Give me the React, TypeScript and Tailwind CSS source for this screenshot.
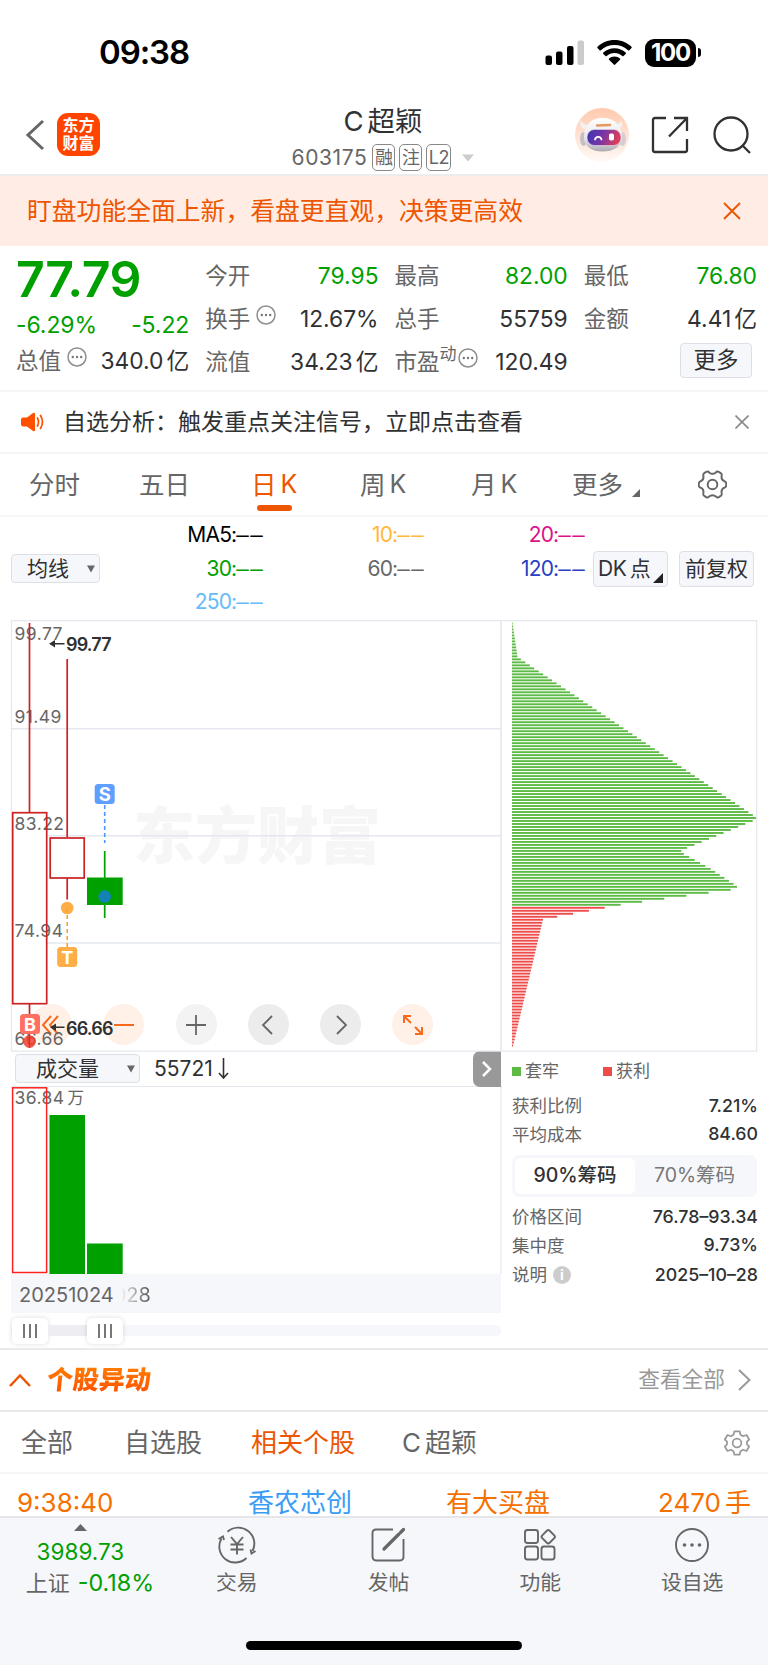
import React from "react";

const INK = "#303133";

function Ellipsis({ className = "" }: { className?: string }) {
  return (
    <svg className={className} width="20" height="20" viewBox="0 0 20 20" fill="none">
      <circle cx="10" cy="10" r="9" stroke="#8e8e8e" strokeWidth="1.5" />
      <circle cx="5.8" cy="10" r="1.2" fill="#777" />
      <circle cx="10" cy="10" r="1.2" fill="#777" />
      <circle cx="14.2" cy="10" r="1.2" fill="#777" />
    </svg>
  );
}

function StatusBar() {
  return (
    <div className="flex h-[96px] items-center justify-between pl-[99px] pr-[67px] pt-[9px]">
      <div className="text-[33px] font-semibold leading-none tracking-[-1.1px] text-black">09:38</div>
      <div className="flex items-center">
        <svg width="40" height="26" viewBox="0 0 40 26">
          <rect x="0.5" y="15.5" width="6.5" height="9.5" rx="2" />
          <rect x="11" y="11.5" width="6.5" height="13.5" rx="2" />
          <rect x="22" y="6" width="6.5" height="19" rx="2" />
          <rect x="32.5" y="0.5" width="6.5" height="24.5" rx="2" fill="#cbcbcb" />
        </svg>
        <svg className="ml-[12px]" width="35" height="26" viewBox="0 0 35 26">
          <path d="M17.5 0C10.9 0 4.900 2.600.5 6.800c-.4.4-.4.9 0 1.300l2.100 2.100c.4.4.9.4 1.300 0C7.500 6.800 12.300 4.900 17.500 4.900s10 1.900 13.600 5.300c.4.4.9.4 1.300 0l2.100-2.100c.4-.4.4-.9 0-1.300C30.100 2.600 24.100 0 17.500 0z" />
          <path d="M17.500 8.300c-4.300 0-8.200 1.600-11.200 4.300-.4.4-.4.9 0 1.300l2.200 2.200c.3.300.8.3 1.200 0 2.100-1.900 4.800-3 7.800-3s5.700 1.100 7.800 3c.4.3.9.3 1.200 0l2.200-2.200c.4-.4.4-.9 0-1.300-3-2.700-6.900-4.300-11.200-4.300z" />
          <path d="M17.500 16.500c-2.100 0-4 .7-5.500 2-.4.3-.4.9 0 1.200l4.800 4.900c.4.400 1 .4 1.400 0l4.800-4.900c.4-.3.4-.9 0-1.200-1.500-1.300-3.400-2-5.500-2z" />
        </svg>
        <div className="ml-[13px] flex h-[28px] w-[51px] items-center justify-center rounded-[9px] bg-black text-[24px] font-bold leading-none tracking-[-1.2px] text-white">
          100
        </div>
        <div className="ml-[2px] h-[9px] w-[3px] rounded-r-full bg-black" />
      </div>
    </div>
  );
}

function Robot() {
  return (
    <svg width="54" height="54" viewBox="0 0 54 54">
      <defs>
        <linearGradient id="halo" x1="0" y1="0" x2="0" y2="1">
          <stop offset="0" stopColor="#ffc9ae" />
          <stop offset="1" stopColor="#fffaf7" />
        </linearGradient>
        <linearGradient id="shell" x1="0" y1="0" x2="0" y2="1">
          <stop offset="0" stopColor="#ffffff" />
          <stop offset="0.65" stopColor="#e6e3e7" />
          <stop offset="1" stopColor="#aca8b0" />
        </linearGradient>
        <linearGradient id="visor" x1="0" y1="0" x2="1" y2="0.2">
          <stop offset="0" stopColor="#3b35b0" />
          <stop offset="0.5" stopColor="#7434a8" />
          <stop offset="1" stopColor="#dc3f5c" />
        </linearGradient>
      </defs>
      <circle cx="27" cy="27" r="27" fill="url(#halo)" />
      <path d="M5.500 12.500c-1 5 1 8.500 6 9.500l4-5c-5 0-8-1.500-10-4.500zM46.500 12.500c2 5 0 8.500-5 9.500l-4-5c5 0 7-1.500 9-4.500z" fill="#f4f1f3" />
      <ellipse cx="8.500" cy="31" rx="3.500" ry="7" fill="#c4c0c7" />
      <ellipse cx="47.500" cy="31" rx="3.500" ry="7" fill="#d2ced4" />
      <path d="M27.500 10C15 10 9 18 9 29c0 10 8 14.500 18.500 14.500S47 39 47 29c0-11-7-19-19.500-19z" fill="url(#shell)" />
      <rect x="12" y="21.500" width="34" height="16" rx="7.500" fill="url(#visor)" stroke="#e9e2ee" strokeWidth="0.6" />
      <path d="M20 31.500c1-3.500 5.500-3.500 6.500 0" stroke="#fff" strokeWidth="1.800" fill="none" strokeLinecap="round" />
      <rect x="34" y="25.500" width="5" height="7" rx="1.800" fill="#fff" />
      <path d="M22 17.500l13-.5" stroke="#e39a62" strokeWidth="2.400" strokeLinecap="round" />
    </svg>
  );
}

function Header() {
  return (
    <div className="flex h-[80px] items-start justify-between border-b-2 border-[#ececec] pl-[25px] pr-[17px]">
      <div className="flex w-[238px] items-center pt-[17px]">
        <svg width="20" height="32" viewBox="0 0 20 32" fill="none">
          <path d="M18 2L3 16L18 30" stroke="#666" strokeWidth="3" />
        </svg>
        <div className="ml-[12px] flex h-[43px] w-[43px] flex-col items-center justify-center gap-[1px] rounded-[11px] bg-[#ff4400] text-[16px] font-bold leading-[17px] text-white">
          <span>东方</span>
          <span>财富</span>
        </div>
      </div>
      <div className="flex w-[200px] flex-col items-center pt-[11px]">
        <div className="flex items-center gap-[4px] text-[27.500px] leading-[28px] text-[#303133]">
          <span>C</span>
          <span>超颖</span>
        </div>
        <div className="mt-[9px] flex items-center text-[#666]">
          <span className="text-[21px] leading-none tracking-[0.6px]">603175</span>
          <span className="ml-[5px] flex h-[27px] w-[23px] items-center justify-center rounded-[5px] border-[1.500px] border-[#888] text-[18px] leading-none">融</span>
          <span className="ml-[4px] flex h-[27px] w-[23px] items-center justify-center rounded-[5px] border-[1.500px] border-[#888] text-[18px] leading-none">注</span>
          <span className="ml-[4px] flex h-[27px] w-[25px] items-center justify-center rounded-[5px] border-[1.500px] border-[#888] text-[18px] leading-none tracking-[-0.5px]">L2</span>
          <svg className="ml-[11px]" width="12" height="8" viewBox="0 0 12 8">
            <path d="M0 0.500H12L6 7.500Z" fill="#ccc" />
          </svg>
        </div>
      </div>
      <div className="flex w-[248px] items-center justify-end pt-[12px]">
        <Robot />
        <svg className="ml-[22px]" width="38" height="38" viewBox="0 0 38 38" fill="none" stroke={INK} strokeWidth="2.300">
          <path d="M15 2H4Q2 2 2 4V34Q2 36 4 36H34Q36 36 36 34V23" />
          <path d="M23 2H36V15M36 2L18 20.500" />
        </svg>
        <svg className="ml-[24px]" width="38" height="38" viewBox="0 0 38 38" fill="none" stroke={INK} strokeWidth="2.300">
          <circle cx="18" cy="18" r="16.500" />
          <path d="M29 29L37 37" />
        </svg>
      </div>
    </div>
  );
}

function Stat({
  label,
  value,
  unit,
  green,
  info,
  sup,
}: {
  label: string;
  value: string;
  unit?: string;
  green?: boolean;
  info?: boolean;
  sup?: string;
}) {
  return (
    <div className="flex h-[43px] items-center justify-between text-[22.800px] leading-none">
      <div className="flex items-center text-[22.500px] text-[#666]">
        <span>{label}</span>
        {sup && <span className="-mr-[5px] mb-[16px] text-[17px]">{sup}</span>}
        {info && <Ellipsis className="mb-[9px] ml-[6px]" />}
      </div>
      <div className={green ? "text-[#00a000]" : "text-[#303133]"}>
        <span>{value}</span>
        {unit && <span className="ml-[3px]">{unit}</span>}
      </div>
    </div>
  );
}

function Quote() {
  return (
    <div className="grid h-[146px] grid-cols-4 gap-x-[16px] border-b-2 border-[#f5f5f6] pl-[16px] pr-[11px] pt-[8px]">
      <div>
        <div className="flex h-[49px] items-center text-[50px] font-semibold leading-none tracking-[-0.500px] text-[#00a000]">77.79</div>
        <div className="flex h-[37px] items-center justify-between pt-[7px] text-[23px] leading-none tracking-[-0.1px] text-[#00a000]">
          <span>-6.29%</span>
          <span>-5.22</span>
        </div>
        <Stat label="总值" value="340.0" unit="亿" info />
      </div>
      <div className="pt-[0.500px]">
        <Stat label="今开" value="79.95" green />
        <Stat label="换手" value="12.67%" info />
        <Stat label="流值" value="34.23" unit="亿" />
      </div>
      <div className="pt-[0.500px]">
        <Stat label="最高" value="82.00" green />
        <Stat label="总手" value="55759" />
        <Stat label="市盈" sup="动" value="120.49" info />
      </div>
      <div className="pt-[0.500px]">
        <Stat label="最低" value="76.80" green />
        <Stat label="金额" value="4.41" unit="亿" />
        <div className="flex justify-end pr-[5px] pt-[2px]">
          <button className="flex h-[35px] w-[72px] items-center justify-center rounded-[4px] border border-[#dcdfe6] bg-[#f6f7fb] pt-[1px] text-[22.500px] leading-none text-[#303133]">更多</button>
        </div>
      </div>
    </div>
  );
}

function Gear({ size, color, turn }: { size: number; color: string; turn?: boolean }) {
  return (
    <svg width={size} height={size} viewBox="0 0 30 30" fill="none" stroke={color} strokeWidth="2">
      {turn ? (
        <path
          strokeLinejoin="round"
          d="M12 1.500H18L19 5.500L22 7.200L26 5.800L29 11L26.500 13.500V16.500L29 19L26 24.200L22 22.800L19 24.500L18 28.500H12L11 24.500L8 22.800L4 24.200L1 19L3.500 16.500V13.500L1 11L4 5.800L8 7.200L11 5.500Z"
        />
      ) : (
        <path
          strokeLinejoin="round"
          d="M8.500 2Q10.500 1 11.500 2.500Q15 5.500 18.500 2.500Q19.500 1 21.500 2L23.500 3.200Q25 4.200 24.500 6Q23.500 10.500 28 12Q29.300 12.700 29.300 15Q29.300 17.300 28 18Q23.500 19.500 24.500 24Q25 25.800 23.500 26.800L21.500 28Q19.500 29 18.500 27.500Q15 24.500 11.500 27.500Q10.500 29 8.500 28L6.500 26.800Q5 25.800 5.500 24Q6.500 19.500 2 18Q0.700 17.300 0.700 15Q0.700 12.700 2 12Q6.500 10.500 5.500 6Q5 4.200 6.500 3.200Z"
        />
      )}
      <circle cx="15" cy="15" r="5" />
    </svg>
  );
}

function PeriodTabs() {
  const tab = "flex items-center gap-[4px] leading-none";
  return (
    <div className="flex h-[63px] items-center border-b-2 border-[#f7f7f8] text-[25.500px] text-[#666]">
      <div className={tab + " ml-[29px] w-[110px]"}>分时</div>
      <div className={tab + " w-[112px]"}>五日</div>
      <div className="relative w-[109px]">
        <div className={tab + " text-[#ee5500]"}>
          <span>日</span>
          <span className="text-[25px]">K</span>
        </div>
        <div className="absolute -bottom-[14px] left-[6px] h-[6px] w-[35px] rounded-full bg-[#ee5500]" />
      </div>
      <div className={tab + " w-[111px]"}>
        <span>周</span>
        <span className="text-[25px]">K</span>
      </div>
      <div className={tab + " w-[101px]"}>
        <span>月</span>
        <span className="text-[25px]">K</span>
      </div>
      <div className="flex w-[126px] items-end leading-none">
        <span>更多</span>
        <svg className="ml-[9px]" width="8" height="8" viewBox="0 0 8 8">
          <path d="M8 0V8H0Z" fill="#666" />
        </svg>
      </div>
      <Gear size={29} color="#666" />
    </div>
  );
}

function Average({ name, className }: { name: string; className: string }) {
  return (
    <span className={className}>
      {name}:<span className="font-['Liberation_Sans',sans-serif] text-[22.500px] leading-none tracking-[1.3px]">––</span>
    </span>
  );
}

function Averages() {
  return (
    <div className="flex h-[103px] items-center">
      <button className="ml-[11px] flex h-[29px] w-[89px] items-center justify-between rounded-[4px] border border-[#dcdfe6] bg-[#f6f7fb] pl-[15px] pr-[4px] text-[21px] leading-none text-[#303133]">
        <span>均线</span>
        <svg width="8" height="8" viewBox="0 0 8 8">
          <path d="M0 0.500H8L4 7.500Z" fill="#666" />
        </svg>
      </button>
      <div className="grid w-[486px] grid-cols-[164px_161px_161px] text-right text-[21px] leading-[33.500px] tracking-[-0.8px]">
        <Average name="MA5" className="text-black" />
        <Average name="10" className="text-[#ffb837]" />
        <Average name="20" className="text-[#dd1188]" />
        <Average name="30" className="text-[#00a000]" />
        <Average name="60" className="text-[#666]" />
        <Average name="120" className="text-[#2a3fc4]" />
        <Average name="250" className="text-[#66bbf8]" />
      </div>
      <button className="relative ml-[7px] flex h-[36px] w-[75px] items-center gap-[3px] rounded-[4px] border border-[#dcdfe6] bg-[#f6f7fb] pl-[4px] text-[21px] leading-none text-[#303133]">
        <span className="tracking-[-0.3px]">DK</span>
        <span>点</span>
        <svg className="absolute bottom-[3px] right-[4px]" width="10" height="10" viewBox="0 0 10 10">
          <path d="M10 0V10H0Z" fill="#222" />
        </svg>
      </button>
      <button className="ml-[11px] flex h-[36px] w-[75px] items-center justify-center rounded-[4px] border border-[#dcdfe6] bg-[#f6f7fb] text-[21px] leading-none text-[#303133]">前复权</button>
    </div>
  );
}

/* Chip distribution: bar lengths by price level, top to bottom. */
function chipWidth(y: number): number {
  const knots: [number, number][] = [
    [623, 0.6], [656, 5.500], [659, 9], [817, 244.500], [820, 242], [850, 169], [853, 171],
    [868, 198], [886, 225.500], [889, 221.500], [904, 110.500], [907, 94.500], [919, 31], [1048, 0.5],
  ];
  for (let i = 1; i < knots.length; i++) {
    const [y0, w0] = knots[i - 1];
    const [y1, w1] = knots[i];
    if (y <= y1) return w0 + ((w1 - w0) * (y - y0)) / (y1 - y0);
  }
  return 0.5;
}

const chips = Array.from({ length: 142 }, (_, i) => {
  const y = 622.5 + i * 2.993;
  return { y, w: chipWidth(y + 0.5), up: y > 905 };
});

function Axis({ y, children }: { y: number; children: string }) {
  return (
    <text x="14.500" y={y} fontSize="17.500" letterSpacing="0.45" fill="#666">
      {children}
    </text>
  );
}

function PriceChart() {
  return (
    <div className="relative h-[431px]">
      <svg className="block" width="768" height="432" viewBox="0 620 768 432">
        <text x="133" y="858.500" fontSize="62" fontWeight="900" fill="#f6f6f6">东方财富</text>
        <g stroke="#e4e7ee" strokeWidth="1.600" fill="none">
          <path d="M11 728.700H501M11 835.700H501M11 943H501" />
          <path d="M11.500 1051V620.700H756.700V1051.200H11" strokeWidth="1.200" />
          <path d="M501 620V1051" />
        </g>
        {chips.map((c) => (
          <rect key={c.y} x="512" y={c.y} width={c.w} height="1.900" fill={c.up ? "#ee4b4b" : "#5cbb45"} />
        ))}
        <rect x="12.700" y="812.700" width="34" height="191" fill="#fff" />
        <Axis y={640}>99.77</Axis>
        <Axis y={722.5}>91.49</Axis>
        <Axis y={830}>83.22</Axis>
        <Axis y={937}>74.94</Axis>
        <g stroke="#cc2222" strokeWidth="1.700" fill="none">
          <path d="M29.500 623V812M29.500 1004V1014M67.200 659V837M67.200 878V899.500" />
          <rect x="12.700" y="812.700" width="34" height="191" />
          <rect x="50.200" y="838" width="34" height="40" fill="#fff" />
        </g>
        <path d="M104.700 851V918" stroke="#00a000" strokeWidth="1.700" />
        <rect x="87" y="877.500" width="35.700" height="27.500" fill="#00a000" />
        <circle cx="104.700" cy="896.500" r="6.300" fill="#1482b4" />
        <path d="M104.700 805V843" stroke="#4d96ff" strokeWidth="1.600" strokeDasharray="4 3" />
        <rect x="94.700" y="784" width="20" height="20" rx="3.500" fill="#5f9fff" />
        <text x="104.700" y="801" fontSize="18.500" fontWeight="700" fill="#fff" textAnchor="middle">S</text>
        <circle cx="67.200" cy="908" r="6.300" fill="#ffad46" />
        <path d="M67.200 908V947" stroke="#ffa030" strokeWidth="1.600" strokeDasharray="4 3" />
        <rect x="57.200" y="947" width="20" height="20" rx="3.500" fill="#ffad46" />
        <text x="67.200" y="963.500" fontSize="18" fontWeight="700" fill="#fff" textAnchor="middle">T</text>
        <g fill="#303133" fontWeight="600" fontSize="18">
          <text x="66" y="650.500" textLength="45.500">99.77</text>
          <path d="M49 643.800L55 640V643H64.500V644.600H55V647.600Z" />
        </g>
      </svg>
      <div className="absolute bottom-[6px] left-[31px] flex gap-[31.300px]">
        <div className="flex h-[41px] w-[41px] items-center justify-center rounded-full bg-[#fff0e8]">
          <svg className="-ml-[3px]" width="18" height="22" viewBox="0 0 18 22" fill="none" stroke="#f66a1c" strokeWidth="2">
            <path d="M10 2L2 11L10 20M17 2L9 11L17 20" />
          </svg>
        </div>
        <div className="flex h-[41px] w-[41px] items-center justify-center rounded-full bg-[#fff0e8]">
          <div className="h-[2px] w-[20px] bg-[#f66a1c]" />
        </div>
        <div className="flex h-[41px] w-[41px] items-center justify-center rounded-full bg-[#f3f3f3]">
          <svg width="20" height="20" viewBox="0 0 20 20" stroke="#666" strokeWidth="1.800">
            <path d="M0 10H20M10 0V20" />
          </svg>
        </div>
        <div className="flex h-[41px] w-[41px] items-center justify-center rounded-full bg-[#ececec]">
          <svg className="-ml-[2px]" width="12" height="20" viewBox="0 0 12 20" fill="none" stroke="#666" strokeWidth="1.800">
            <path d="M11 1L2 10L11 19" />
          </svg>
        </div>
        <div className="flex h-[41px] w-[41px] items-center justify-center rounded-full bg-[#ececec]">
          <svg className="ml-[2px]" width="12" height="20" viewBox="0 0 12 20" fill="none" stroke="#666" strokeWidth="1.800">
            <path d="M1 1L10 10L1 19" />
          </svg>
        </div>
        <div className="flex h-[41px] w-[41px] items-center justify-center rounded-full bg-[#fff0e8]">
          <svg width="20" height="20" viewBox="0 0 20 20" fill="none" stroke="#f66a1c" strokeWidth="2">
            <path d="M1 8V1H8M1 1L8 8M12 19H19V12M19 19L12 12" />
          </svg>
        </div>
      </div>
      <svg className="absolute bottom-0 left-0" width="120" height="41" viewBox="0 1010 120 41">
        <Axis y={1045}>66.66</Axis>
        <circle cx="29.500" cy="1041.500" r="6.300" fill="#f5402f" fillOpacity="0.85" />
        <path d="M29.500 1034V1048" stroke="#e02a1c" strokeWidth="1.500" />
        <rect x="20" y="1014" width="20" height="20" rx="3.500" fill="#ff7062" />
        <text x="30" y="1030.500" fontSize="18" fontWeight="700" fill="#fff" textAnchor="middle">B</text>
        <path d="M50 1027.300L56 1023.500V1026.500H64.500V1028.100H56V1031.100Z" fill="#303133" />
        <text x="66" y="1034.500" fontSize="18" fontWeight="600" fill="#303133" textLength="47.500">66.66</text>
      </svg>
    </div>
  );
}

function VolumePanel() {
  return (
    <div className="flex w-[502px] flex-col pl-[11px]">
      <div className="flex h-[36px] shrink-0 items-center border-b-[1.500px] border-[#e4e7ee]">
        <button className="ml-[4px] flex h-[29px] w-[125px] items-center justify-between rounded-[4px] border border-[#dcdfe6] bg-[#f6f7fb] pl-[20px] pr-[4px] text-[21px] leading-none text-[#303133]">
          <span>成交量</span>
          <svg width="8" height="8" viewBox="0 0 8 8">
            <path d="M0 0.500H8L4 7.500Z" fill="#666" />
          </svg>
        </button>
        <span className="ml-[14px] text-[21px] leading-none text-[#303133]">55721</span>
        <svg className="ml-[5px]" width="11" height="21" viewBox="0 0 11 21" fill="none" stroke={INK} strokeWidth="1.600">
          <path d="M5.500 0V20M1 15L5.500 20L10 15" />
        </svg>
        <div className="ml-auto mr-[1px] flex h-[36px] w-[28px] items-center justify-center rounded-l-[7px] bg-[#999]">
          <svg width="10" height="16" viewBox="0 0 10 16" fill="none" stroke="#fff" strokeWidth="2.500">
            <path d="M1 1L8 8L1 15" />
          </svg>
        </div>
      </div>
      <svg className="block shrink-0" width="491" height="187" viewBox="11 1087 491 187">
        <path d="M501 1087V1274" stroke="#eceef3" strokeWidth="1.600" />
        <text x="14.500" y="1104" fontSize="17.500" letterSpacing="0.45" fill="#666">36.84</text>
        <text x="67.500" y="1104" fontSize="16.500" fill="#666">万</text>
        <rect x="12.600" y="1087.800" width="34" height="184.700" fill="none" stroke="#ff2020" strokeWidth="1.500" />
        <rect x="49.500" y="1115" width="35.500" height="159" fill="#00a000" />
        <rect x="87" y="1243.500" width="35.700" height="30.500" fill="#00a000" />
      </svg>
      <div className="flex h-[39px] w-[490px] shrink-0 items-center bg-[#f6f7fa] pl-[8px] pt-[2px] text-[20px] leading-none text-[#666]">
        <span>20251024</span>
        <span className="bg-[linear-gradient(90deg,transparent_20%,#ddd_30%,#bbb_50%,#666_85%)] bg-clip-text text-transparent">028</span>
      </div>
      <div className="flex h-[35px] shrink-0 items-center">
        <div className="flex h-[11px] w-[490px] items-center rounded-full bg-[#f6f7fa] pl-[1px]">
          <Handle />
          <div className="h-[11px] w-[39px] bg-[#eeeef2]" />
          <Handle />
        </div>
      </div>
    </div>
  );
}

function Handle() {
  return (
    <div className="flex h-[26px] w-[36px] shrink-0 items-center justify-center gap-[4px] rounded-[5px] bg-white shadow-[0_0_5px_rgba(0,0,0,0.14)]">
      <i className="h-[14px] w-[2px] bg-[#777]" />
      <i className="h-[14px] w-[2px] bg-[#777]" />
      <i className="h-[14px] w-[2px] bg-[#777]" />
    </div>
  );
}

function Fact({ label, value, info }: { label: string; value: string; info?: boolean }) {
  return (
    <div className="flex h-[28.500px] shrink-0 items-center justify-between leading-none">
      <span className="flex items-center text-[17.500px] text-[#666]">
        {label}
        {info && (
          <span className="ml-[6px] flex h-[18px] w-[18px] items-center justify-center rounded-full bg-[#ccc] text-[14px] font-bold text-white">i</span>
        )}
      </span>
      <span className="text-[17.800px] font-medium text-[#303133]">{value}</span>
    </div>
  );
}

function ChipPanel() {
  return (
    <div className="flex w-[266px] flex-col pl-[10px] pr-[10px]">
      <div className="flex h-[40.500px] shrink-0 items-center text-[17px] leading-none text-[#666]">
        <i className="mr-[4px] h-[9px] w-[9px] bg-[#5cbb45]" />
        <span className="w-[78px]">套牢</span>
        <i className="mr-[4px] h-[9px] w-[9px] bg-[#ee4b4b]" />
        <span>获利</span>
      </div>
      <Fact label="获利比例" value="7.21%" />
      <Fact label="平均成本" value="84.60" />
      <div className="mb-[5px] mr-[1px] mt-[6px] flex h-[42px] shrink-0 rounded-[7px] bg-[#f6f7fa] p-[3px] text-[19.500px] leading-none">
        <div className="flex w-[120px] items-center justify-center rounded-[6px] bg-white pt-[1px] font-medium text-[#303133]">90%筹码</div>
        <div className="flex flex-1 items-center justify-center pt-[1px] text-[#777]">70%筹码</div>
      </div>
      <div className="mt-[1px]" />
      <Fact label="价格区间" value="76.78–93.34" />
      <Fact label="集中度" value="9.73%" />
      <div className="mt-[1px]" />
      <Fact label="说明" value="2025–10–28" info />
    </div>
  );
}

function Movers() {
  return (
    <div className="flex h-[168px] flex-col">
      <div className="flex h-[64px] shrink-0 items-center border-b-2 border-t-2 border-[#e9eaed] pl-[9px] pr-[17px]">
        <svg width="22" height="14" viewBox="0 0 22 14" fill="none" stroke="#ee5500" strokeWidth="2.500">
          <path d="M1 13L11 2.500L21 13" />
        </svg>
        <span className="ml-[16px] -skew-x-6 bg-gradient-to-b from-[#ff7e00] to-[#ff4c00] bg-clip-text text-[26px] font-black leading-[30px] text-transparent">个股异动</span>
        <span className="ml-auto text-[21.700px] leading-none text-[#999]">查看全部</span>
        <svg className="ml-[13px]" width="13" height="22" viewBox="0 0 13 22" fill="none" stroke="#999" strokeWidth="2">
          <path d="M1 1L11.500 11L1 21" />
        </svg>
      </div>
      <div className="flex h-[62px] shrink-0 items-center border-b-2 border-[#f5f5f6] pl-[21px] pr-[18px] pt-[1px] text-[26px] leading-none text-[#666]">
        <span className="w-[103px]">全部</span>
        <span className="w-[127px]">自选股</span>
        <span className="w-[151px] text-[#ee5500]">相关个股</span>
        <span className="flex gap-[4px]">
          <span>C</span>
          <span>超颖</span>
        </span>
        <span className="ml-auto">
          <Gear size={26} color="#999" turn />
        </span>
      </div>
      <div className="flex h-[42px] shrink-0 items-end pl-[17px] pr-[17px] text-[26px] leading-[26px] text-[#f57000]">
        <span className="w-[231px]">9:38:40</span>
        <span className="w-[198px] text-[#3a9cf5]">香农芯创</span>
        <span>有大买盘</span>
        <span className="ml-auto flex gap-[4px]">
          <span>2470</span>
          <span>手</span>
        </span>
      </div>
    </div>
  );
}

function NavItem({ label, children }: { label: string; children: React.ReactNode }) {
  return (
    <div className="flex w-[152px] flex-col items-center pt-[8px] text-[#666]">
      <svg width="38" height="38" viewBox="0 0 38 38" fill="none" stroke="#666" strokeWidth="1.900">
        {children}
      </svg>
      <span className="mt-[9px] text-[20.800px] leading-none">{label}</span>
    </div>
  );
}

function BottomBar() {
  return (
    <div className="relative flex h-[149px] border-t-2 border-[#e4e6ea] bg-[#f6f7fa]">
      <div className="flex w-[161px] flex-col items-center pt-[6px]">
        <svg width="13" height="7" viewBox="0 0 13 7">
          <path d="M0 7L6.500 0L13 7Z" fill="#666" />
        </svg>
        <div className="mt-[9px] text-[22.500px] leading-[24px] text-[#00a000]">3989.73</div>
        <div className="mt-[7px] flex items-center pl-[19px] text-[22px] leading-none">
          <span className="text-[#666]">上证</span>
          <span className="ml-[8px] text-[23.300px] text-[#00a000]">-0.18%</span>
        </div>
      </div>
      <NavItem label="交易">
        <path d="M9.500 5.800A16 16 0 0 1 34.500 25M28.500 32A16 16 0 0 1 3.500 12.500" />
        <path d="M0.500 13L5 10.500L6 14M37.500 25L33.500 27.500L32.500 23.500" />
        <path d="M13 11L19 18L25 11M19 18V28.500M12.500 18.500H25.500M12.500 23.500H25.500" />
      </NavItem>
      <NavItem label="发帖">
        <path d="M24 3.500H7Q3.500 3.500 3.500 7V30Q3.500 34.500 7 34.500H30Q34.500 34.500 34.500 31V13" />
        <path d="M15 23L30 8M31.500 6.500L34.500 3.500" strokeWidth="3.200" strokeLinecap="round" />
      </NavItem>
      <NavItem label="功能">
        <rect x="4" y="4" width="13" height="13" rx="2.500" />
        <rect x="4" y="20.500" width="13" height="13" rx="2.500" />
        <rect x="20.500" y="20.500" width="13" height="13" rx="2.500" />
        <rect x="22" y="5.500" width="10.500" height="10.500" rx="2" transform="rotate(45 27.250 10.750)" />
      </NavItem>
      <NavItem label="设自选">
        <circle cx="19" cy="19" r="16" />
        <g fill="#666" stroke="none">
          <circle cx="11.500" cy="19" r="1.800" />
          <circle cx="19" cy="19" r="1.800" />
          <circle cx="26.500" cy="19" r="1.800" />
        </g>
      </NavItem>
      <div className="absolute bottom-[15px] left-[246px] h-[9px] w-[276px] rounded-full bg-black" />
    </div>
  );
}

export default function App() {
  return (
    <div className="h-[1665px] w-[768px] overflow-hidden bg-white font-['Inter','Noto_Sans_CJK_SC',sans-serif]">
      <StatusBar />
      <Header />
      <div className="flex h-[70px] items-center justify-between bg-[#ffede5] pl-[27px] pr-[27px]">
        <span className="text-[24.800px] leading-none text-[#ee5500]">盯盘功能全面上新，看盘更直观，决策更高效</span>
        <svg width="18" height="18" viewBox="0 0 18 18" stroke="#ee5500" strokeWidth="1.900">
          <path d="M1 1L17 17M17 1L1 17" />
        </svg>
      </div>
      <Quote />
      <div className="flex h-[62px] items-center border-b-2 border-[#f5f5f6] pl-[21px] pr-[19px]">
        <svg width="24" height="20" viewBox="0 0 24 20" fill="none">
          <path d="M2 5.500H6L12 1Q14 0 14 2V18Q14 20 12 19L6 14.500H2Q0 14.500 0 12.500V7.500Q0 5.500 2 5.500Z" fill="#ff5000" />
          <path d="M16.500 6Q18.500 10 16.500 14M19.500 3.500Q23.500 10 19.500 16.500" stroke="#ff5000" strokeWidth="1.700" strokeLinecap="round" />
        </svg>
        <span className="ml-[18px] text-[23px] leading-none text-[#303133]">自选分析：触发重点关注信号，立即点击查看</span>
        <svg className="ml-auto" width="14" height="14" viewBox="0 0 14 14" stroke="#888" strokeWidth="1.600">
          <path d="M0.500 0.500L13.500 13.500M13.500 0.500L0.500 13.500" />
        </svg>
      </div>
      <PeriodTabs />
      <Averages />
      <PriceChart />
      <div className="flex h-[297px]">
        <VolumePanel />
        <ChipPanel />
      </div>
      <Movers />
      <BottomBar />
    </div>
  );
}
